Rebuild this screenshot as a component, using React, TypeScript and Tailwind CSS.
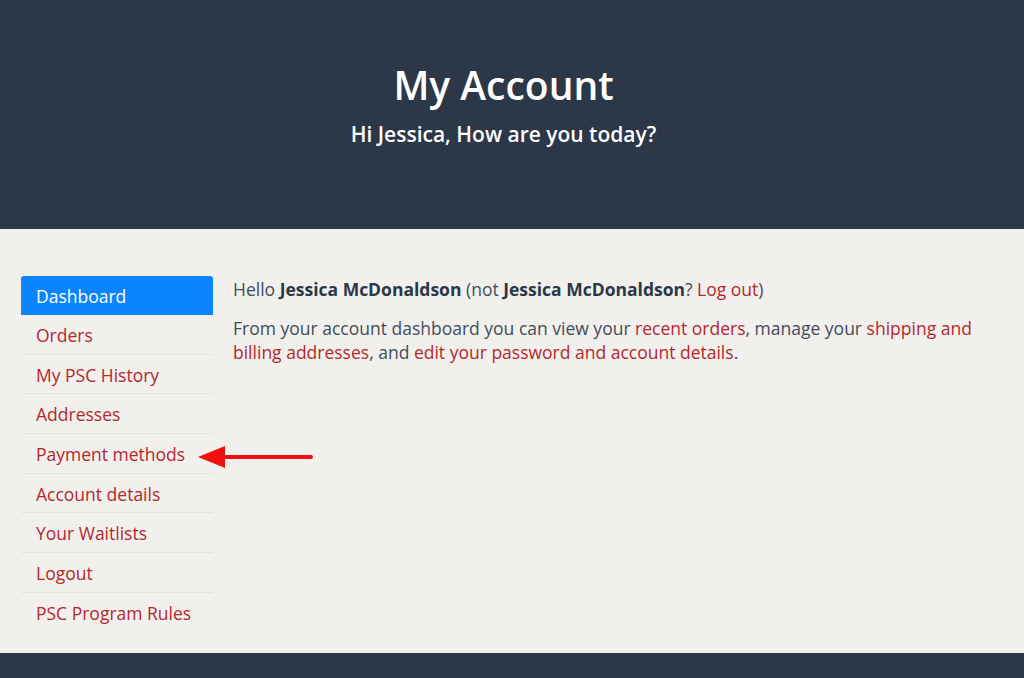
const navItems = [
  "Orders",
  "My PSC History",
  "Addresses",
  "Payment methods",
  "Account details",
  "Your Waitlists",
  "Logout",
  "PSC Program Rules",
];

export default function App() {
  return (
    <div className="min-h-[678px] bg-[#2c3748] font-['Open_Sans','Noto_Sans',sans-serif]">
      <header className="flex h-[229px] flex-col items-center bg-[#2c3748] pr-[17px] pt-[59px] text-white">
        <h1 className="text-[39px] font-semibold leading-[52px]">My Account</h1>
        <p className="mt-[8px] text-[21px] font-semibold leading-[30px]">Hi Jessica, How are you today?</p>
      </header>

      <main className="flex h-[424px] gap-[20px] bg-[#f1f0ed] pl-[21px] pt-[47px]">
        <nav className="w-[192px] shrink-0">
          <a className="block h-[39px] rounded-t-[3px] bg-[#0a84ff] px-[15px] text-[17.5px] leading-[40px] text-white">
            Dashboard
          </a>
          {navItems.map((item, i) => (
            <div
              key={item}
              className={`relative h-[39.7px] px-[15px] text-[17.5px] leading-[40px] text-[#b3282d] ${
                i < navItems.length - 1 ? "border-b border-[#dfe2e6]" : ""
              }`}
            >
              {item}
              {item === "Payment methods" && (
                <svg className="absolute left-[177px] top-[11px]" width="120" height="24" viewBox="0 0 120 24">
                  <line x1="20" y1="12" x2="113" y2="12" stroke="#f01010" strokeWidth="4" strokeLinecap="round" />
                  <polygon points="0,12 27,1 27,23" fill="#f01010" />
                </svg>
              )}
            </div>
          ))}
        </nav>

        <section className="pr-[40px] pt-[1px] text-[17.5px] leading-[24px] text-[#434c59]">
          <p>
            Hello <strong className="font-bold text-[#2c3748]">Jessica McDonaldson</strong> (not{" "}
            <strong className="font-bold text-[#2c3748]">Jessica McDonaldson</strong>?{" "}
            <a className="text-[#b3282d]">Log out</a>)
          </p>
          <p className="mt-[15px]">
            From your account dashboard you can view your <a className="text-[#b3282d]">recent orders</a>, manage your{" "}
            <a className="text-[#b3282d]">shipping and billing addresses</a>, and{" "}
            <a className="text-[#b3282d]">edit your password and account details</a>.
          </p>
        </section>
      </main>
    </div>
  );
}
